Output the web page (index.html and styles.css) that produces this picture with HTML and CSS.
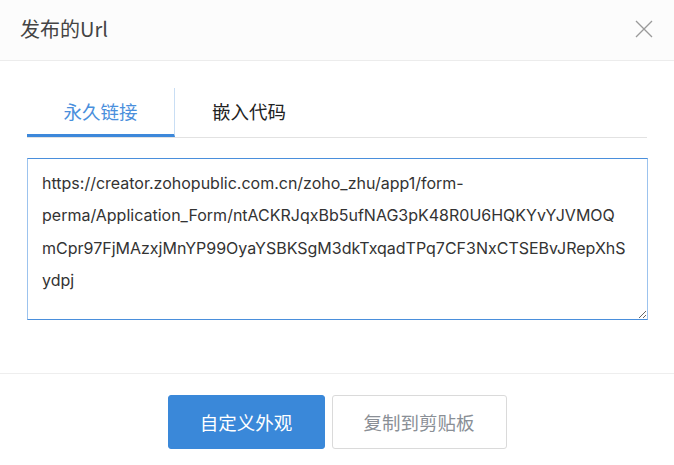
FILE: index.html
```html
<!DOCTYPE html>
<html lang="zh-CN">
<head>
<meta charset="utf-8">
<title>发布的Url</title>
<link rel="stylesheet" href="styles.css">
</head>
<body>
<div class="dialog">
  <div class="header">
    <span class="title">发布的Url</span>
    <svg class="close" width="18" height="18" viewBox="0 0 18 18"><path d="M1 1 L17 17 M17 1 L1 17" stroke="#9a9a9a" stroke-width="1.3" fill="none"/></svg>
  </div>
  <div class="body">
    <div class="tabs">
      <div class="tab active">永久链接</div>
      <div class="tab">嵌入代码</div>
    </div>
    <textarea class="url" spellcheck="false">https://creator.zohopublic.com.cn/zoho_zhu/app1/form-
perma/Application_Form/ntACKRJqxBb5ufNAG3pK48R0U6HQKYvYJVMOQ
mCpr97FjMAzxjMnYP99OyaYSBKSgM3dkTxqadTPq7CF3NxCTSEBvJRepXhS
ydpj</textarea>
  </div>
  <div class="footer">
    <button class="btn primary">自定义外观</button>
    <button class="btn">复制到剪贴板</button>
  </div>
</div>
</body>
</html>
```
FILE: styles.css
```css
html, body {
  margin: 0;
  padding: 0;
  background: #fff;
}
.dialog {
  width: 674px;
  height: 465px;
  font-family: "Noto Sans CJK SC", "Noto Sans", sans-serif;
  color: #333;
}
.header {
  height: 60px;
  padding: 0 21px 0 20px;
  background: #fcfcfc;
  border-bottom: 1px solid #ececec;
  display: flex;
  align-items: center;
  justify-content: space-between;
}
.title {
  font-size: 20px;
  color: #444;
  margin-top: -4px;
}
.close {
  display: block;
  margin-top: -3px;
}
.body {
  padding: 27px 27px 0 27px;
  height: 285px;
  border-bottom: 1px solid #eeeeee;
}
.tabs {
  display: flex;
  border-bottom: 1px solid #e2e2e2;
  height: 49px;
}
.tab {
  font-size: 18.5px;
  line-height: 46px;
  color: #222;
  padding: 0 37px;
}
.tab.active {
  width: 147px;
  padding: 0;
  text-align: center;
  color: #4a8fdc;
  border-right: 1px solid #c9def4;
  border-bottom: 3px solid #3d88da;
}
.url {
  display: block;
  box-sizing: border-box;
  margin-top: 20px;
  width: 621px;
  height: 162px;
  padding: 8px 6px 8px 14px;
  border: 1px solid #4a8fdc;
  border-left-color: #9cc3ee;
  border-right-color: #9cc3ee;
  border-radius: 0;
  font-family: "Inter", "Open Sans", sans-serif;
  font-size: 16px;
  line-height: 32.4px;
  color: #333;
  outline: none;
  resize: both;
  white-space: pre-wrap;
}
.footer {
  display: flex;
  justify-content: center;
  gap: 7px;
  padding-top: 21px;
}
.btn {
  height: 54px;
  font-family: "Noto Sans CJK SC", sans-serif;
  font-size: 18.5px;
  border-radius: 3px;
  border: 1px solid #dadada;
  background: #fff;
  color: #8a8f96;
  width: 175px;
  padding: 0;
}
.btn.primary {
  width: 157px;
  background: #3a88d9;
  border-color: #3a88d9;
  color: #fff;
}
```
